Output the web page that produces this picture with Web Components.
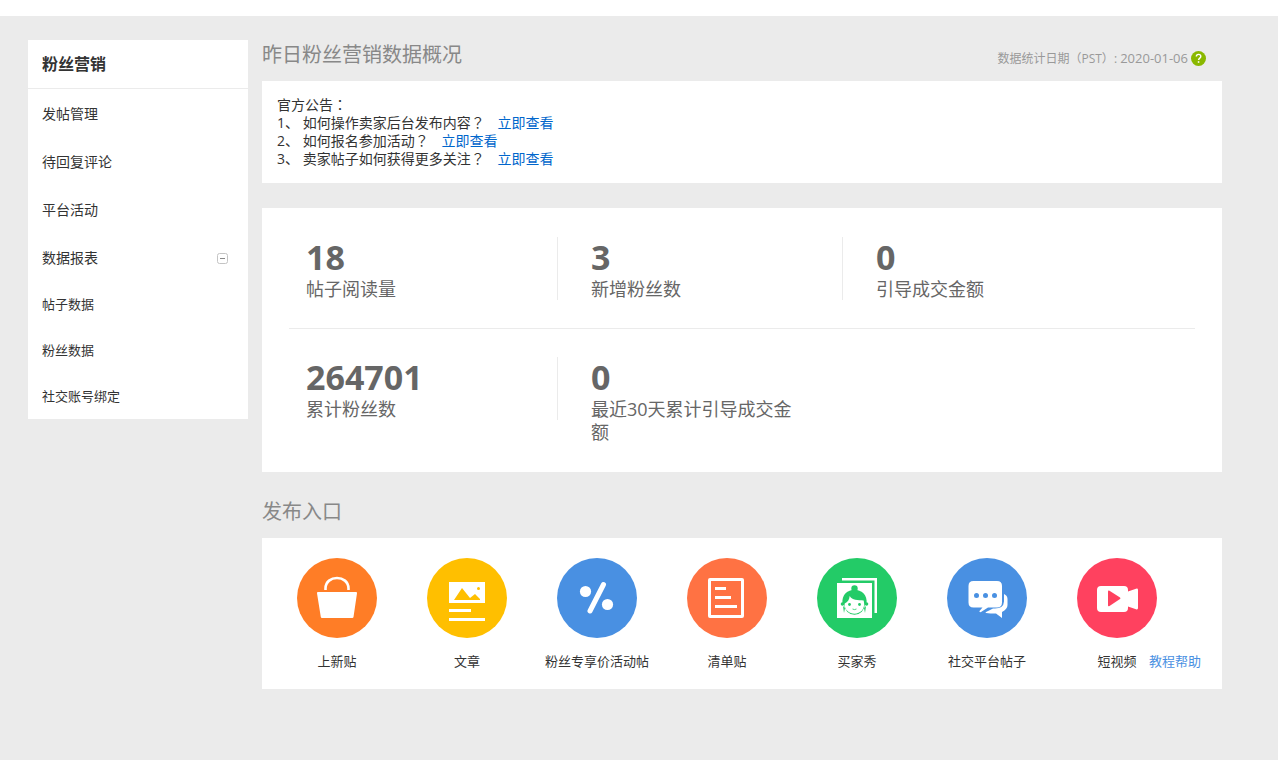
<!DOCTYPE html>
<html lang="zh-CN">
<head>
<meta charset="utf-8">
<meta name="viewport" content="width=device-width, initial-scale=1">
<title>粉丝营销</title>
<style>
html{background:#ebebeb}
body{margin:0;font-family:"Open Sans","Noto Sans CJK SC",sans-serif;font-size:14px;line-height:18px;color:#333}
</style>
</head>
<body>
<fan-page>
  <side-menu slot="side" heading="粉丝营销">
    <menu-item>发帖管理</menu-item>
    <menu-item>待回复评论</menu-item>
    <menu-item>平台活动</menu-item>
    <menu-item expandable>数据报表</menu-item>
    <menu-item sub>帖子数据</menu-item>
    <menu-item sub>粉丝数据</menu-item>
    <menu-item sub>社交账号绑定</menu-item>
  </side-menu>
  <section-title heading="昨日粉丝营销数据概况"><stat-date>2020-01-06</stat-date></section-title>
  <notice-board></notice-board>
  <stats-panel>
    <stat-cell slot="top" value="18">帖子阅读量</stat-cell>
    <stat-cell slot="top" value="3" divided>新增粉丝数</stat-cell>
    <stat-cell slot="top" value="0" divided>引导成交金额</stat-cell>
    <stat-cell slot="bottom" value="264701">累计粉丝数</stat-cell>
    <stat-cell slot="bottom" value="0" divided>最近30天累计引导成交金额</stat-cell>
  </stats-panel>
  <section-title heading="发布入口"></section-title>
  <entry-panel>
    <entry-link icon="bag" style="--tint:#ff7d26">上新贴</entry-link>
    <entry-link icon="article" style="--tint:#ffbf00">文章</entry-link>
    <entry-link icon="percent" style="--tint:#4990e2">粉丝专享价活动帖</entry-link>
    <entry-link icon="list" style="--tint:#ff7243">清单贴</entry-link>
    <entry-link icon="buyer" style="--tint:#23cb67">买家秀</entry-link>
    <entry-link icon="chat" style="--tint:#4990e2">社交平台帖子</entry-link>
    <entry-link icon="video" style="--tint:#ff415f">短视频</entry-link>
  </entry-panel>
</fan-page>

<script>
const define = (name, render) => customElements.define(name, class extends HTMLElement {
  constructor() {
    super();
    this.attachShadow({ mode: 'open' });
  }
  connectedCallback() {
    this.shadowRoot.innerHTML = render(this);
  }
});

define('fan-page', () => `
<style>
:host{display:block}
header{height:16px;background:#fff}
.wrap{display:flex;align-items:flex-start;gap:14px;padding:24px 56px 24px 28px}
main{flex:1;min-width:0}
</style>
<header></header>
<div class="wrap"><slot name="side"></slot><main><slot></slot></main></div>`);

define('side-menu', el => `
<style>
:host{display:block;flex:none;width:220px;background:#fff}
h2{margin:0;padding:0 14px;border-bottom:1px solid #ebebeb;font-size:16px;line-height:48px;font-weight:700}
</style>
<h2>${el.getAttribute('heading')}</h2>
<nav><slot></slot></nav>`);

define('menu-item', el => `
<style>
:host{display:flex;align-items:center;justify-content:space-between;padding:2px 20px 0 14px;line-height:46px}
:host([sub]){padding-top:0;font-size:13px}
a{color:#333;text-decoration:none}
button{display:flex;padding:0;border:0;background:none}
</style>
<a href="#"><slot></slot></a>
${el.hasAttribute('expandable') ? `<button type="button" aria-label="收起"><svg width="11" height="11" viewBox="0 0 11 11" fill="none"><rect x=".5" y=".5" width="10" height="10" rx="2" stroke="#c4c4c4"/><path d="M3 5.5h5" stroke="#888"/></svg></button>` : ''}`);

define('section-title', el => `
<style>
:host{display:flex;justify-content:space-between;align-items:flex-start;height:41px}
h1{margin:0;font-size:20px;line-height:30px;font-weight:400;color:#888}
:host(:not(:first-of-type)){margin-top:25px}
</style>
<h1>${el.getAttribute('heading')}</h1><slot></slot>`);

define('stat-date', () => `
<style>
:host{display:flex;align-items:center;gap:3px;padding:9px 16px 0 0;font-size:12px;line-height:18px;color:#999}
time{font-size:13px}
button{display:flex;padding:0;border:0;background:none}
svg{display:block}
</style>
<span>数据统计日期<span lang="zh-TW">（</span>PST<span lang="zh-TW">）</span>: <time><slot></slot></time></span>
<button type="button" aria-label="帮助"><svg width="15" height="15" viewBox="0 0 15 15"><circle cx="7.5" cy="7.5" r="7.5" fill="#8ab800"/><path d="M5.3 5.6c0-3 4.5-2.9 4.5-.1 0 1.7-2.2 1.6-2.2 3.5" fill="none" stroke="#fff" stroke-width="1.4"/><rect x="6.8" y="10.2" width="1.5" height="1.6" fill="#fff"/></svg></button>`);

define('notice-board', () => `
<style>
:host{display:block;padding:15px;background:#fff}
p{margin:0}
a{margin-left:2px;color:#0066cc;text-decoration:none}
</style>
<p>官方公告<span lang="zh-TW">：</span></p>
<p>1、 如何操作卖家后台发布内容<span lang="zh-TW">？</span>&nbsp;&nbsp; <a href="#">立即查看</a></p>
<p>2、 如何报名参加活动<span lang="zh-TW">？</span>&nbsp;&nbsp; <a href="#">立即查看</a></p>
<p>3、 卖家帖子如何获得更多关注<span lang="zh-TW">？</span>&nbsp;&nbsp; <a href="#">立即查看</a></p>`);

define('stats-panel', () => `
<style>
:host{display:block;margin-top:25px;padding:29px 0 28px;background:#fff}
.row{display:grid;grid-template-columns:repeat(3,1fr);padding:0 95px 0 10px}
hr{margin:27px 27px 28px;border:0;height:1px;background:#ebebeb}
</style>
<div class="row"><slot name="top"></slot></div>
<hr>
<div class="row"><slot name="bottom"></slot></div>`);

define('stat-cell', el => `
<style>
:host{display:flex;color:#666}
i{flex:none;width:1px;height:63px}
:host([divided]) i{background:#ebebeb}
div{flex:1;padding:0 33px}
strong{display:block;font-size:34px;line-height:40px;margin-bottom:1px}
span{display:block;font-size:18px;line-height:23px}
</style>
<i></i><div><strong>${el.getAttribute('value')}</strong><span><slot></slot></span></div>`);

define('entry-panel', () => `
<style>
:host{display:flex;align-items:flex-end;padding:20px 10px 19px;background:#fff;font-size:13px}
a{margin-left:-33px;color:#4990e2;text-decoration:none;white-space:nowrap}
</style>
<slot></slot><a href="#">教程帮助</a>`);

const icons = {
  bag: `<path d="M28.5 32v-1.5c0-14 23-14 23 0V32" fill="none" stroke="#fff" stroke-width="2.6"/><path d="M21 34h38q1.2 0 1 1.2L56.5 59q-.2 1-1.2 1H25q-1 0-1.2-1L20 35.2Q19.8 34 21 34z"/>`,
  article: `<path d="M22 24h36v21H22zM22 51h22v3H22zM22 60h36v3H22z"/><path d="M27 42l8-12 8 10 5-4 5 5v1z" fill="var(--tint)"/><circle cx="51.5" cy="30.5" r="1.5" fill="var(--tint)"/>`,
  percent: `<circle cx="28.5" cy="33.5" r="5.6"/><circle cx="50.5" cy="46.5" r="5.6"/><path d="M46.5 26.5L33 53" stroke="#fff" stroke-width="5" stroke-linecap="round"/>`,
  list: `<rect x="22.5" y="21.5" width="33" height="37" rx=".5" fill="none" stroke="#fff" stroke-width="3"/><path d="M28 29h11v3H28zM28 38h16v3H28zM28 47h22v3H28z"/>`,
  buyer: `<path d="M25 20h35v35h-2.500V22.500H25zM20 25h35v35H20z"/><g fill="var(--tint)"><circle cx="37.500" cy="30.500" r="3.200"/><path d="M25.500 46c-2.500-19 26.500-19 24 0z"/><circle cx="25.500" cy="46" r="1.800"/><circle cx="49.500" cy="46" r="1.800"/><path d="M26 48l1 7 1-5zM49 48l-1 7-1-5z"/><circle cx="37.500" cy="46.500" r="10.300"/></g><path d="M27.700 45.500c3-1.500 4.500-3.500 5-7.500 2.500 4.500 8 4 14 4.500 4 17-20 17-19 3z"/><g fill="var(--tint)"><circle cx="32.500" cy="46.500" r="1.400"/><circle cx="42.500" cy="46.500" r="1.400"/></g><path d="M35.500 51q2 1.200 4 0" fill="none" stroke="var(--tint)" stroke-width=".8"/>`,
  chat: `<path d="M57 36q3.500 1.500 3.500 5v6q0 4-5.500 7v6l-6-4.500q-6 0-10-.5-1-.3 0-1l7-3.500h2q8.500 0 9-7z"/><path d="M26.500 23h23.500q5 0 5 5v16.500q0 5-5 5h-9l-7 4.500q-2 .5-1.500-1l3-3.500h-9q-5 0-5-5V28q0-5 5-5z"/><g fill="var(--tint)"><circle cx="29.500" cy="37.500" r="2.500"/><circle cx="38.500" cy="37.500" r="2.500"/><circle cx="47.500" cy="37.500" r="2.500"/></g>`,
  video: `<path d="M24 28h23q4 0 4 4v1.500l8-2.700q2-.7 2 1.200v18q0 1.900-2 1.200L51 48.500V50q0 4-4 4H24q-4 0-4-4V32q0-4 4-4z"/><path d="M31 33.500q0-1.500 1.500-.7L43 39.500q1 .8 0 1.600L32.500 48q-1.500.8-1.500-.7z" fill="var(--tint)"/>`
};

define('entry-link', el => `
<style>
:host{display:block;flex:0 0 130px}
a{display:flex;flex-direction:column;align-items:center;gap:14px;color:#333;text-decoration:none}
svg{display:block}
</style>
<a href="#"><svg width="80" height="80" viewBox="0 0 80 80" fill="#fff" aria-hidden="true"><circle cx="40" cy="40" r="40" fill="var(--tint)"/>${icons[el.getAttribute('icon')]}</svg><span><slot></slot></span></a>`);
</script>
</body>
</html>
